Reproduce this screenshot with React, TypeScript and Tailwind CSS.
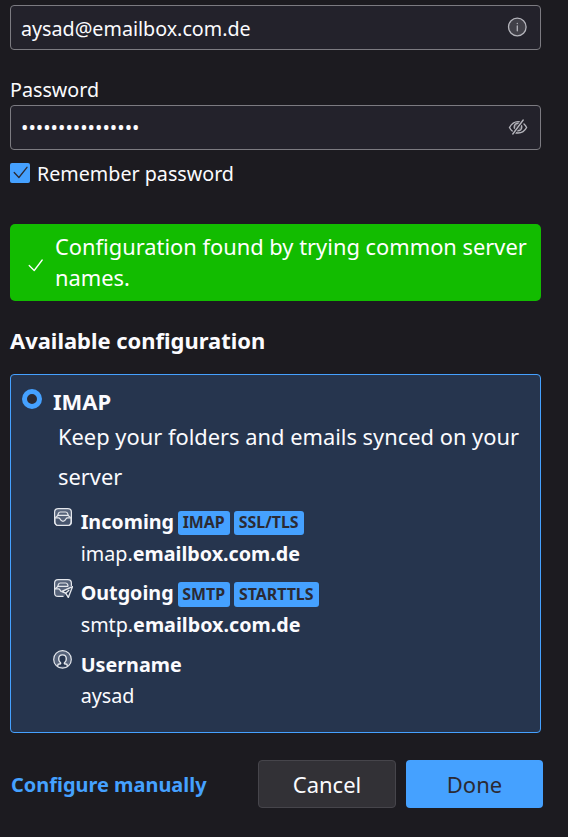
import type { ReactNode } from "react";

const stroke = {
  fill: "none",
  stroke: "currentColor",
  strokeLinecap: "round" as const,
  strokeLinejoin: "round" as const,
};

function InfoIcon() {
  return (
    <svg className="mb-px h-5 w-5 text-[#b4b4bb]" viewBox="0 0 20 20" {...stroke} strokeWidth="1.3">
      <circle cx="10.300" cy="10" r="8.800" fill="#414048" />
      <path d="M10.300 9v4.800" />
      <path d="M10.300 6.300v.3" />
    </svg>
  );
}

function HiddenIcon() {
  return (
    <svg className="mb-[2px] h-5 w-5 text-[#b4b4bb]" viewBox="0 0 20 20" {...stroke} strokeWidth="1.400">
      <circle cx="10" cy="10" r="3.800" fill="#55545c" />
      <path d="M1.500 10.500C4 6 7 4.600 10 4.600c1.200 0 2.300.2 3.300.6M16 7c1 .9 1.900 2 2.600 3.500C16.500 14.500 13.500 16 10 16c-1.200 0-2.300-.2-3.200-.5M4.500 14.200C3.300 13.300 2.300 12.100 1.500 10.500" />
      <path d="M15.200 3 4.800 17" stroke="#23222b" strokeWidth="3.200" />
      <path d="M15.200 3 4.800 17" />
    </svg>
  );
}

function InboxIcon() {
  return (
    <svg className="h-5 w-5 text-[#e4e7ec]" viewBox="0 -0.5 20 20" {...stroke} strokeWidth="1.200">
      <rect x="1.600" y="1.100" width="16.800" height="16.800" rx="3.500" fill="#56637a" />
      <path d="M2.500 10 4.600 8.300 5.500 5.800c.3-.9.900-1.300 1.800-1.300h5.400c.9 0 1.500.4 1.800 1.300l.9 2.500L17.500 10" />
      <path d="M5 7.900h10" />
      <path d="M2 10.300h3.400c.8 0 1.200.4 1.500 1 .7 1.500 1.500 2.500 3.100 2.500s2.400-1 3.100-2.500c.3-.6.700-1 1.500-1H18v3.900c0 2.300-1.300 3.700-3.600 3.700H5.600C3.300 17.900 2 16.500 2 14.200Z" fill="#47556d" />
    </svg>
  );
}

function OutboxIcon() {
  return (
    <svg className="h-5 w-5 text-[#e4e7ec]" viewBox="0 -0.5 20 20" {...stroke} strokeWidth="1.200">
      <path d="M18.400 8V4.600c0-2-1.400-3.500-3.500-3.500H5.100c-2 0-3.500 1.400-3.500 3.500v9.800c0 2.100 1.400 3.500 3.500 3.500H11L18.400 8Z" fill="#56637a" stroke="none" />
      <path d="M18.400 7V4.600c0-2-1.400-3.500-3.500-3.500H5.100c-2 0-3.500 1.400-3.500 3.500v9.800c0 2.100 1.400 3.500 3.500 3.500H10" />
      <path d="M2.500 10 4.600 8.300 5.500 5.800c.3-.9.900-1.300 1.800-1.300h5.400c.9 0 1.500.4 1.800 1.300l.6 1.700" />
      <path d="M5 7.900h9.500M2 10.300h3.400c.8 0 1.200.4 1.500 1 .3.700.6 1.200 1 1.600" />
      <path d="M19.500 8.200 8.800 13l3.900 1.700 2.600 4.200 4.200-10.700Z" fill="#26354e" strokeWidth="1.400" />
      <path d="m12.700 14.700 3.200-3" strokeWidth="1.400" />
    </svg>
  );
}

function UserIcon() {
  return (
    <svg className="h-5 w-5 text-[#e4e7ec]" viewBox="0 -0.9 20 20" {...stroke} strokeWidth="1.200">
      <circle cx="9.500" cy="9.500" r="8.800" fill="#56637a" />
      <path d="M4.800 16.600v-1.300c0-.7.500-1.200 1.300-1.200h.7c.9 0 1.200-.9.500-1.500C6.200 11.700 5.700 10.500 5.700 9c0-2.300 1.600-4 3.800-4s3.800 1.700 3.800 4c0 1.500-.5 2.700-1.600 3.600-.7.600-.4 1.500.5 1.500h.7c.8 0 1.300.5 1.300 1.200v1.300" fill="#26354e" strokeWidth="1.400" />
    </svg>
  );
}

function Badge({ className, children }: { className: string; children: ReactNode }) {
  return (
    <span className={`flex items-center justify-center rounded-[3px] bg-[#45a1ff] pt-px text-[15.900px] font-bold text-[#2b2a33] ${className}`}>
      {children}
    </span>
  );
}

function ServerRow({ icon, title, badges, children }: { icon: ReactNode; title: string; badges?: ReactNode; children: ReactNode }) {
  return (
    <div className="flex h-[63px]">
      <div className="mt-px w-[27.700px] shrink-0">{icon}</div>
      <div>
        <div className="flex h-8 items-center">
          <span className={`w-[93px] text-[19.730px] font-bold ${badges ? "" : "pt-[2px]"}`}>{title}</span>
          {badges}
        </div>
        <div className="h-[31px] text-[19.730px] leading-[31px]">{children}</div>
      </div>
    </div>
  );
}

export default function App() {
  return (
    <main className="h-[837px] w-[568px] overflow-hidden bg-[#1c1b20] pt-[5px] pl-[10px] font-['Noto_Sans',sans-serif] text-[#fbfbfe]">
      <div className="flex h-[45px] w-[531px] items-center justify-between rounded-[4px] border border-[#7c7b81] bg-[#23222b] pr-[13px] pl-[10px]">
        <span className="pt-[2px] text-[19.700px]">aysad@emailbox.com.de</span>
        <InfoIcon />
      </div>

      <div className="mt-[25px] h-[30px] text-[19.700px] leading-[30px]">Password</div>
      <div className="flex h-[45px] w-[531px] items-center justify-between rounded-[4px] border border-[#7c7b81] bg-[#23222b] pr-[12px] pl-[10px]">
        <span className="text-[19.700px]">••••••••••••••••</span>
        <HiddenIcon />
      </div>

      <label className="mt-[8px] flex h-[30px] items-center">
        <span className="flex h-5 w-5 items-center justify-center rounded-[2px] bg-[#45a1ff]">
          <svg className="h-5 w-5 text-[#2b2a33]" viewBox="0 0 20 20" {...stroke} strokeWidth="1.300">
            <path d="m4.200 9.500 4.700 5L17 4.300" />
          </svg>
        </span>
        <span className="ml-[7px] pt-[2px] text-[19.700px]">Remember password</span>
      </label>

      <div className="mt-[36px] flex h-[77px] w-[531px] items-center rounded-[5px] bg-[#12bc00] pl-[15px]">
        <svg className="mt-[5px] h-5 w-5 shrink-0 text-white" viewBox="0 0 20 20" {...stroke} strokeWidth="1.300">
          <path d="m4.200 10.500 5 5L17.200 5" />
        </svg>
        <p className="mb-[2px] ml-[10px] text-[21.860px] leading-[31px] text-white">
          Configuration found by trying common server
          <br />
          names.
        </p>
      </div>

      <h2 className="mt-[24px] h-[32px] text-[21.950px] leading-[32px] font-bold">Available configuration</h2>

      <section className="mt-[17px] h-[359px] w-[531px] rounded-[4px] border border-[#45a1ff] bg-[#26354e] pt-[11px] pl-[11px]">
        <div className="flex h-[31px]">
          <span className="mt-[3px] h-5 w-5 rounded-full border-5 border-[#45a1ff] bg-[#2b2a33]" />
          <span className="ml-[11px] h-[31px] text-[22px] leading-[31px] font-bold">IMAP</span>
        </div>
        <p className="ml-[36px] text-[21.860px] leading-[40px]">
          Keep your folders and emails synced on your
          <br />
          server
        </p>
        <div className="mt-[9px] ml-[31px] flex flex-col gap-[8px]">
          <ServerRow
            icon={<InboxIcon />}
            title="Incoming"
            badges={
              <>
                <Badge className="mt-px ml-[4px] h-6 w-[52px]">IMAP</Badge>
                <Badge className="mt-px ml-[4px] h-6 w-[70px]">SSL/TLS</Badge>
              </>
            }
          >
            imap.<b>emailbox.com.de</b>
          </ServerRow>
          <ServerRow
            icon={<OutboxIcon />}
            title="Outgoing"
            badges={
              <>
                <Badge className="mt-[2px] ml-[4px] h-[25px] w-[52px]">SMTP</Badge>
                <Badge className="mt-[2px] ml-[4px] h-[25px] w-[85px]">STARTTLS</Badge>
              </>
            }
          >
            smtp.<b>emailbox.com.de</b>
          </ServerRow>
          <ServerRow icon={<UserIcon />} title="Username">
            aysad
          </ServerRow>
        </div>
      </section>

      <footer className="mt-[27px] flex h-12 w-[533px] items-center">
        <a className="pt-[2px] pl-px text-[19.950px] font-bold text-[#45a1ff]">Configure manually</a>
        <button className="ml-auto h-12 w-[138px] rounded-[4px] border border-[#46454b] bg-[#323136] text-[22px]">Cancel</button>
        <button className="ml-[10px] h-12 w-[137px] rounded-[4px] bg-[#45a1ff] text-[22px] text-[#2b2a33]">Done</button>
      </footer>
    </main>
  );
}
